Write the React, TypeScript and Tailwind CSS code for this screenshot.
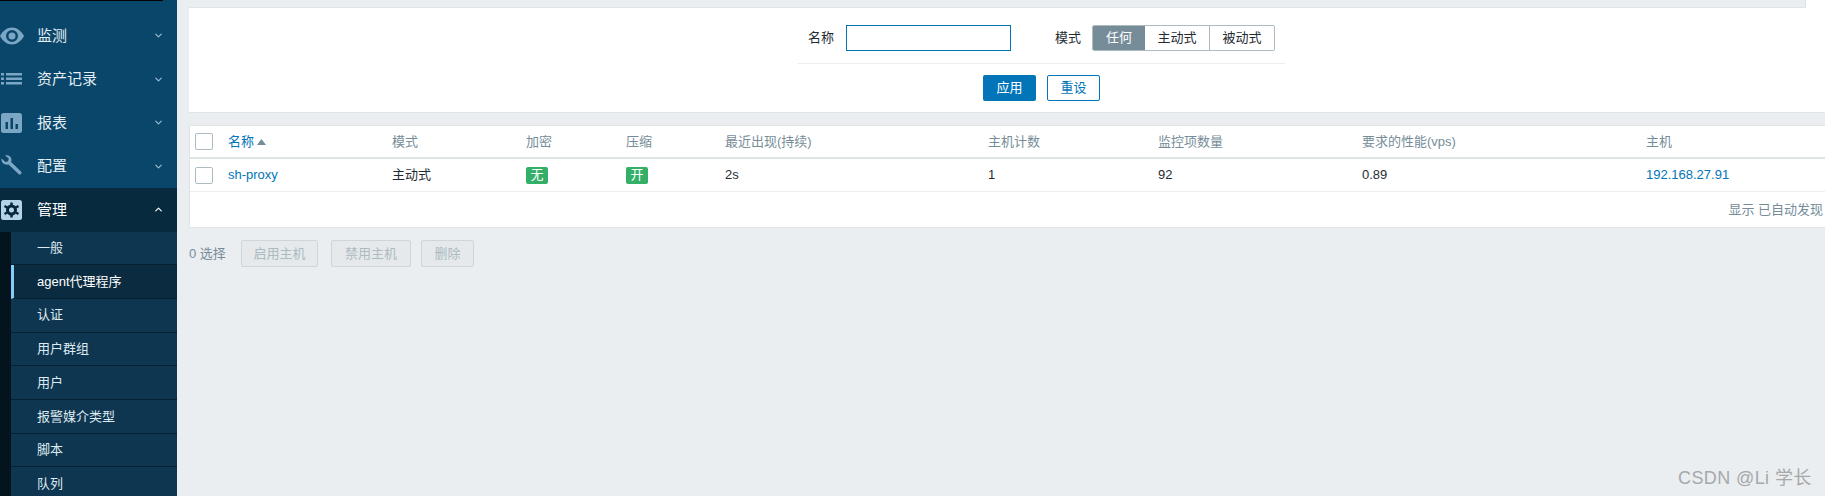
import React from 'react';
import { ChevronDown, ChevronUp } from 'lucide-react';

const FONT = '"Liberation Sans", Arial, "Noto Sans CJK SC", sans-serif';
const COLS = 'grid grid-cols-[38px_164px_134px_100px_99px_263px_170px_204px_284px_1fr] items-center';

function EyeIcon() {
  return (
    <svg width="24" height="18" viewBox="0 0 24 18" className="shrink-0">
      <path
        fillRule="evenodd"
        fill="#7ba7c4"
        d="M0 9C3 3.500 7.200 0.500 12 0.500S21 3.500 24 9c-3 5.500-7.200 8.500-12 8.500S3 14.500 0 9zm12-6a6 6 0 1 0 0 12a6 6 0 0 0 0-12zm0 2.500a3.500 3.500 0 1 1 0 7a3.500 3.500 0 0 1 0-7z"
      />
    </svg>
  );
}

function ListIcon() {
  return (
    <svg width="24" height="14" viewBox="0 0 24 14" className="shrink-0" fill="#7ba7c4">
      <rect x="1" y="1" width="3" height="2.500" />
      <rect x="1" y="5.500" width="3" height="2.500" />
      <rect x="1" y="10" width="3" height="2.500" />
      <rect x="6" y="1" width="16" height="2.500" />
      <rect x="6" y="5.500" width="16" height="2.500" />
      <rect x="6" y="10" width="16" height="2.500" />
    </svg>
  );
}

function ChartIcon() {
  return (
    <svg width="24" height="22" viewBox="0 0 24 22" className="shrink-0">
      <rect x="1" y="1" width="21" height="20" rx="2.500" fill="#7ba7c4" />
      <rect x="5.500" y="10" width="2.500" height="7" fill="#0a466a" />
      <rect x="10.500" y="6" width="2.500" height="11" fill="#0a466a" />
      <rect x="15.500" y="12" width="2.500" height="5" fill="#0a466a" />
    </svg>
  );
}

function WrenchIcon() {
  return (
    <svg width="24" height="22" viewBox="0 0 24 22" className="shrink-0">
      <path
        fill="#7ba7c4"
        d="M1.500 3.500l4 3.500 2.500-.8.800-2.700L5 0.500C8-.5 11.500 1.500 11.500 5c0 .8-.1 1.500-.4 2.100l9.900 9.400c1.500 1.500-.8 4.200-2.500 2.600L8.500 9.400C5 10.500 .8 7.800 1.500 3.500z"
      />
    </svg>
  );
}

function GearIcon() {
  return (
    <svg width="24" height="22" viewBox="0 0 24 22" className="shrink-0">
      <rect x="1" y="1" width="21" height="20" rx="2.500" fill="#b5d3e6" />
      <circle cx="11.500" cy="11" r="4" fill="none" stroke="#07283c" strokeWidth="3" />
      <g stroke="#07283c" strokeWidth="2.500">
        <path d="M11.500 3.500v3M11.500 15.500v3M4.500 7l2.600 1.500M15.900 13.500l2.600 1.500M18.500 7l-2.600 1.500M7.100 13.500L4.500 15" />
      </g>
    </svg>
  );
}

const menu = [
  { label: '监测', icon: <EyeIcon /> },
  { label: '资产记录', icon: <ListIcon /> },
  { label: '报表', icon: <ChartIcon /> },
  { label: '配置', icon: <WrenchIcon /> },
];

const subMenu = ['一般', 'agent代理程序', '认证', '用户群组', '用户', '报警媒介类型', '脚本', '队列'];

function Sidebar() {
  return (
    <aside className="w-[177px] h-[496px] shrink-0 bg-[#0a466a] overflow-hidden">
      <div className="h-px w-[163px] bg-black" />
      <div className="h-[13px]" />
      {menu.map((item) => (
        <div key={item.label} className="h-[43.5px] flex items-center text-[15px] text-[#e4eef4]">
          <div className="w-[37px]">{item.icon}</div>
          <span className="flex-1">{item.label}</span>
          <ChevronDown size={11} strokeWidth={2.5} className="mr-[13px] text-[#9dbcd0]" />
        </div>
      ))}
      <div className="h-[43.5px] flex items-center text-[15px] text-white bg-[#082a3e]">
        <div className="w-[37px]">
          <GearIcon />
        </div>
        <span className="flex-1">管理</span>
        <ChevronUp size={11} strokeWidth={2.5} className="mr-[13px] text-white" />
      </div>
      <div className="flex">
        <div className="w-[11px] shrink-0 bg-[#04141f]" />
        <ul className="flex-1 bg-[#0e3650] text-[13px] text-[#dfeaf1]">
          {subMenu.map((name) => {
            const active = name === 'agent代理程序';
            return (
              <li
                key={name}
                className={`h-[33.7px] flex items-center border-b border-[#06202f] ${
                  active ? 'bg-[#0a2b40] text-white border-l-[3px] border-l-[#86ccf7] pl-[23px]' : 'pl-[26px]'
                }`}
              >
                {name}
              </li>
            );
          })}
        </ul>
      </div>
    </aside>
  );
}

function FilterPanel() {
  return (
    <section className="w-[1705px] bg-white border-b border-[#dfe4e7]">
      <div className="h-2 w-[1617px] bg-[#ebeef0] border-b border-r border-[#dfe4e7]" />
      <div className="w-[487px] mx-auto">
        <div className="flex items-center pt-[17px] pb-3 px-[10px] border-b border-[#ebeef0] text-[13px] text-[#1f2c33]">
          <span className="w-[26px]">名称</span>
          <div className="ml-3 w-[165px] h-[26px] border border-[#0275b8]" />
          <span className="ml-11 w-[26px]">模式</span>
          <div className="ml-[11px] flex h-[26px] rounded-[2px] overflow-hidden border border-[#acbbc2]">
            <div className="w-[52px] flex items-center justify-center bg-[#768d99] text-white">任何</div>
            <div className="w-[65px] flex items-center justify-center border-r border-[#acbbc2]">主动式</div>
            <div className="w-[64px] flex items-center justify-center">被动式</div>
          </div>
        </div>
        <div className="flex justify-center gap-[11px] pt-[11px] pb-[11px] text-[13px]">
          <button className="w-[53px] h-[26px] bg-[#0275b8] text-white rounded-[2px]">应用</button>
          <button className="w-[53px] h-[26px] bg-white text-[#0275b8] border border-[#0275b8] rounded-[2px]">重设</button>
        </div>
      </div>
    </section>
  );
}

function Checkbox() {
  return <div className="w-[18px] h-[17px] ml-[5px] bg-white border border-[#acbbc2] rounded-[2px]" />;
}

function ProxyTable() {
  return (
    <section className="mt-3 w-[1705px] bg-white border border-[#dfe4e7] text-[13px]">
      <div className={`${COLS} h-[33px] border-b-2 border-[#dfe4e7] text-[#768d99]`}>
        <Checkbox />
        <div className="flex items-center gap-[3px] text-[#0275b8]">
          名称
          <svg width="9" height="6" viewBox="0 0 9 6">
            <path d="M4.500 0L9 6H0z" fill="#768d99" />
          </svg>
        </div>
        <div>模式</div>
        <div>加密</div>
        <div>压缩</div>
        <div>最近出现(持续)</div>
        <div>主机计数</div>
        <div>监控项数量</div>
        <div>要求的性能(vps)</div>
        <div>主机</div>
      </div>
      <div className={`${COLS} h-[33px] border-b border-[#ebeef0] text-[#1f2c33]`}>
        <Checkbox />
        <div className="text-[#0275b8]">sh-proxy</div>
        <div>主动式</div>
        <div>
          <span className="inline-flex items-center justify-center w-[22px] h-[17px] bg-[#34af67] text-white rounded-[2px]">无</span>
        </div>
        <div>
          <span className="inline-flex items-center justify-center w-[22px] h-[17px] bg-[#34af67] text-white rounded-[2px]">开</span>
        </div>
        <div>2s</div>
        <div>1</div>
        <div>92</div>
        <div>0.89</div>
        <div className="text-[#0275b8]">192.168.27.91</div>
      </div>
      <div className="h-[35px] flex items-center justify-end pr-[70px] whitespace-nowrap text-[#768d99]">
        显示 已自动发现
      </div>
    </section>
  );
}

function ActionBar() {
  const btn = 'h-[27px] whitespace-nowrap bg-[#e6e9eb] border border-[#cfd6da] rounded-[2px] text-[13px] text-[#acbbc2]';
  return (
    <div className="mt-3 flex items-center text-[13px] text-[#768d99]">
      <span className="w-[52px]">0 选择</span>
      <button className={`${btn} w-[77px]`}>启用主机</button>
      <button className={`${btn} w-[80px] ml-[13px]`}>禁用主机</button>
      <button className={`${btn} w-[53px] ml-[10px]`}>删除</button>
    </div>
  );
}

export default function App() {
  return (
    <div className="relative flex w-[1825px] h-[496px] overflow-hidden bg-[#ebeef0]" style={{ fontFamily: FONT }}>
      <Sidebar />
      <main className="flex-1 pl-3 overflow-hidden">
        <FilterPanel />
        <ProxyTable />
        <ActionBar />
      </main>
      <div className="absolute left-[1678px] top-[465px] text-[18px] tracking-[0.4px] text-[#a6a8aa]">CSDN @Li 学长</div>
    </div>
  );
}
